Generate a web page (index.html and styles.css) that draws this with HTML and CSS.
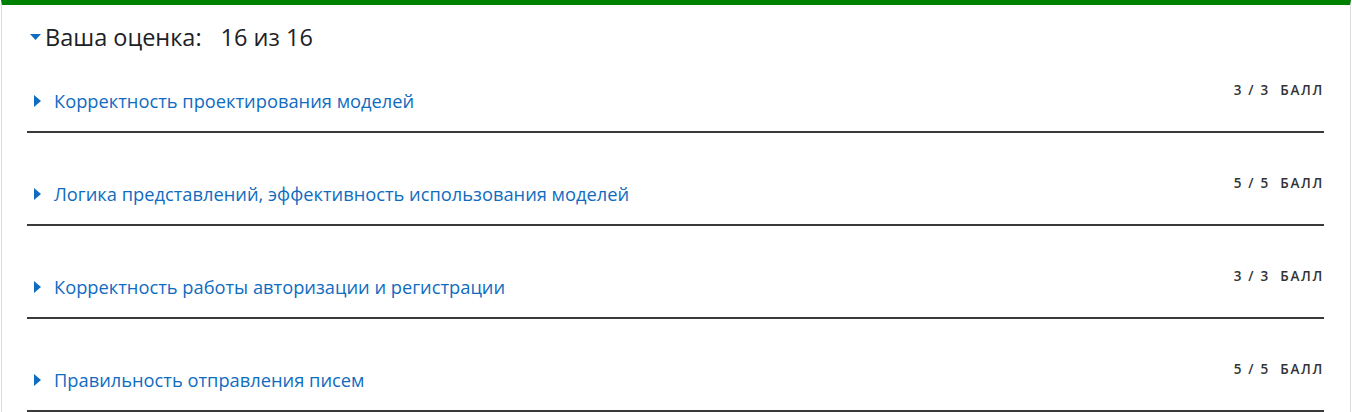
FILE: index.html
```html
<!DOCTYPE html>
<html lang="ru">
<head>
<meta charset="utf-8">
<link rel="stylesheet" href="styles.css">
</head>
<body>
<div class="card">
  <div class="summary">
    <svg class="caret-down" width="11" height="6" viewBox="0 0 11 6"><path d="M0 0 H11 L5.5 6 Z" fill="#0f6cbf"/></svg>
    <span class="summary-label">Ваша оценка:</span>
    <span class="summary-value">16 из 16</span>
  </div>
  <div class="criteria">
    <div class="row">
      <div class="row-title"><svg class="caret-right" width="7" height="12" viewBox="0 0 7 12"><path d="M0 0 L7 6 L0 12 Z" fill="#0f6cbf"/></svg><span>Корректность проектирования моделей</span></div>
      <div class="score">3 / 3 &nbsp;БАЛЛ</div>
    </div>
    <div class="row">
      <div class="row-title"><svg class="caret-right" width="7" height="12" viewBox="0 0 7 12"><path d="M0 0 L7 6 L0 12 Z" fill="#0f6cbf"/></svg><span>Логика представлений, эффективность использования моделей</span></div>
      <div class="score">5 / 5 &nbsp;БАЛЛ</div>
    </div>
    <div class="row">
      <div class="row-title"><svg class="caret-right" width="7" height="12" viewBox="0 0 7 12"><path d="M0 0 L7 6 L0 12 Z" fill="#0f6cbf"/></svg><span>Корректность работы авторизации и регистрации</span></div>
      <div class="score">3 / 3 &nbsp;БАЛЛ</div>
    </div>
    <div class="row">
      <div class="row-title"><svg class="caret-right" width="7" height="12" viewBox="0 0 7 12"><path d="M0 0 L7 6 L0 12 Z" fill="#0f6cbf"/></svg><span>Правильность отправления писем</span></div>
      <div class="score">5 / 5 &nbsp;БАЛЛ</div>
    </div>
  </div>
</div>
</body>
</html>
```
FILE: styles.css
```css
html, body {
  margin: 0;
  padding: 0;
  background: #fff;
}
body {
  font-family: "Open Sans", "Noto Sans", sans-serif;
  color: #1d2125;
}
.card {
  margin-left: 1px;
  width: 1350px;
  border: 1px solid #dcdcdc;
  border-top: 5px solid #008000;
  height: 420px;
  box-sizing: border-box;
  padding: 0 26px 0 25px;
}
.summary {
  display: flex;
  align-items: center;
  height: 53px;
  padding-top: 13px;
  padding-bottom: 3px;
  padding-left: 3px;
  box-sizing: border-box;
  font-size: 23.5px;
  line-height: 32px;
  color: #1d2125;
}
.caret-down {
  margin-right: 4px;
  margin-top: 1px;
}
.summary-label {
  margin-right: 19px;
}
.row {
  display: flex;
  justify-content: space-between;
  align-items: flex-end;
  height: 93px;
  box-sizing: border-box;
  border-bottom: 2px solid #3a3a3a;
  padding-bottom: 18px;
}
.row:first-child {
  height: 75px;
}
.row-title {
  display: flex;
  align-items: center;
  padding-left: 7px;
  font-size: 18.3px;
  line-height: 24px;
  color: #0f6cbf;
}
.caret-right {
  margin-right: 13px;
}
.score {
  margin-bottom: 14px;
  font-size: 13.5px;
  line-height: 18px;
  font-weight: 600;
  letter-spacing: 1.7px;
  color: #333;
}
```
